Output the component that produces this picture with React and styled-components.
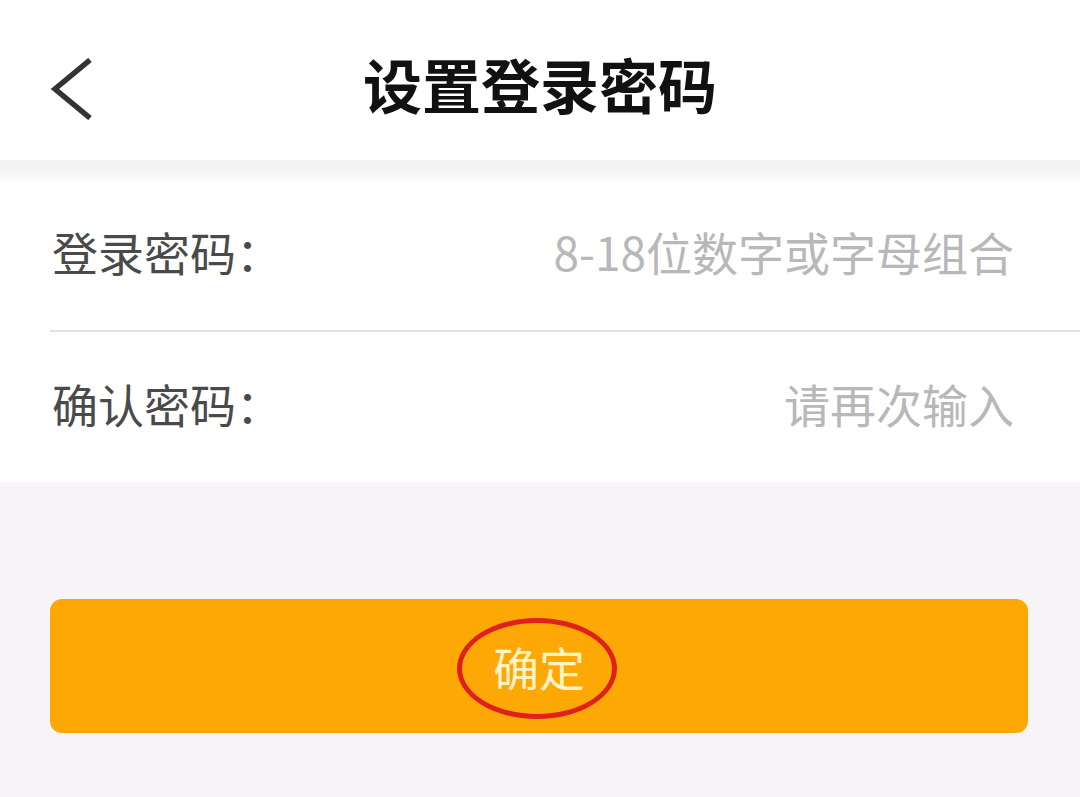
import React from "react";
import styled, { createGlobalStyle } from "styled-components";

const GlobalStyle = createGlobalStyle`
  html, body {
    margin: 0;
    padding: 0;
    background: #f7f4f7;
    font-family: "Noto Sans CJK SC", "Noto Sans", sans-serif;
  }
`;

function BackIcon() {
  return (
    <svg width="44" height="62" viewBox="0 0 44 62" fill="none">
      <polyline
        points="40,2 5,31 40,60"
        stroke="#333"
        strokeWidth="5.5"
        strokeLinecap="butt"
        strokeLinejoin="miter"
      />
    </svg>
  );
}

const fields = [
  { label: "登录密码：", placeholder: "8-18位数字或字母组合" },
  { label: "确认密码：", placeholder: "请再次输入" },
];

function App() {
  return (
    <Page>
      <GlobalStyle />
      <Header>
        <BackButton>
          <BackIcon />
        </BackButton>
        <Title>设置登录密码</Title>
        <span />
      </Header>
      <Band />
      <Form>
        {fields.map((f, i) => (
          <React.Fragment key={f.label}>
            {i > 0 && <Divider />}
            <Row>
              <Label>{f.label}</Label>
              <Input placeholder={f.placeholder} type="password" />
            </Row>
          </React.Fragment>
        ))}
      </Form>
      <Footer>
        <Submit>
          <Marked>确定</Marked>
        </Submit>
      </Footer>
    </Page>
  );
}

const Page = styled.div`
  width: 1080px;
  min-height: 797px;
  display: flex;
  flex-direction: column;
  background: #f7f4f7;
`;

const Header = styled.header`
  height: 160px;
  background: #fff;
  display: grid;
  grid-template-columns: 1fr auto 1fr;
  align-items: center;
  padding: 6px 50px 0;
  box-sizing: border-box;
`;

const BackButton = styled.div`
  display: flex;
  align-items: center;
  margin-top: 12px;
`;

const Title = styled.h1`
  margin: 0;
  font-size: 59px;
  font-weight: 700;
  color: #111;
  letter-spacing: 0;
`;

const Band = styled.div`
  height: 20px;
  background: linear-gradient(#f3f3f3, #f5f5f5 60%, #fafafa);
`;

const Form = styled.section`
  background: #fff;
  display: flex;
  flex-direction: column;
`;

const Row = styled.div`
  height: 150px;
  display: flex;
  align-items: center;
  padding: 0 66px 8px 52px;
  box-sizing: border-box;
`;

const Label = styled.span`
  font-size: 46px;
  color: #4a4a4a;
  white-space: nowrap;
`;

const Input = styled.input`
  flex: 1;
  min-width: 0;
  border: none;
  outline: none;
  background: transparent;
  text-align: right;
  font-family: inherit;
  font-size: 46px;
  color: #333;
  padding: 0;
  &::placeholder {
    color: #b8b8b8;
  }
`;

const Divider = styled.div`
  height: 2px;
  margin-left: 50px;
  background: #e2e2e2;
`;

const Footer = styled.div`
  flex: 1;
  padding: 117px 52px 0 50px;
`;

const Submit = styled.button`
  width: 100%;
  height: 134px;
  border: none;
  border-radius: 12px;
  background: #fea805;
  display: flex;
  align-items: center;
  justify-content: center;
  font-family: inherit;
  cursor: pointer;
`;

const Marked = styled.span`
  position: relative;
  font-size: 46px;
  color: #fff3c8;
  line-height: 1;
  &::after {
    content: "";
    position: absolute;
    left: -36px;
    right: -32px;
    top: -25px;
    bottom: -30px;
    border: 5px solid #e0201c;
    border-radius: 50%;
  }
`;

export default App;
